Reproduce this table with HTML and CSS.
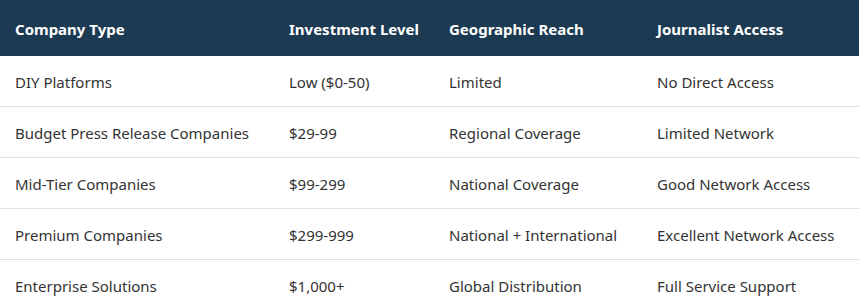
FILE: index.html
```html
<!DOCTYPE html>
<html lang="en">
<head>
<meta charset="UTF-8" />
<meta name="viewport" content="width=device-width, initial-scale=1" />
<title>Press Release Company Comparison</title>
<link rel="stylesheet" href="styles.css">
</head>
<body>
<table class="compare">
  <colgroup>
    <col class="c-type">
    <col class="c-invest">
    <col class="c-reach">
    <col class="c-access">
  </colgroup>
  <thead>
    <tr>
      <th>Company Type</th>
      <th>Investment Level</th>
      <th>Geographic Reach</th>
      <th>Journalist Access</th>
    </tr>
  </thead>
  <tbody>
    <tr>
      <td>DIY Platforms</td>
      <td>Low ($0-50)</td>
      <td>Limited</td>
      <td>No Direct Access</td>
    </tr>
    <tr>
      <td>Budget Press Release Companies</td>
      <td>$29-99</td>
      <td>Regional Coverage</td>
      <td>Limited Network</td>
    </tr>
    <tr>
      <td>Mid-Tier Companies</td>
      <td>$99-299</td>
      <td>National Coverage</td>
      <td>Good Network Access</td>
    </tr>
    <tr>
      <td>Premium Companies</td>
      <td>$299-999</td>
      <td>National + International</td>
      <td>Excellent Network Access</td>
    </tr>
    <tr>
      <td>Enterprise Solutions</td>
      <td>$1,000+</td>
      <td>Global Distribution</td>
      <td>Full Service Support</td>
    </tr>
  </tbody>
</table>
</body>
</html>
```

FILE: styles.css
```css
body {
  margin: 0;
  background: #fff;
  font-family: 'Noto Sans', 'Open Sans', sans-serif;
  color: #333;
}

.compare {
  width: 100%;
  border-collapse: collapse;
  table-layout: fixed;
  font-size: 15px;
}
.c-type { width: 274px; }
.c-invest { width: 160px; }
.c-reach { width: 208px; }

.compare th {
  background: #1c3a52;
  color: #fff;
  font-weight: 700;
  text-align: left;
  padding: 19px 15px 17px;
  line-height: 20px;
}
.compare td {
  padding: 16px 15px 14px;
  line-height: 20px;
  border-bottom: 1px solid #e0e0e0;
  white-space: nowrap;
}
```
